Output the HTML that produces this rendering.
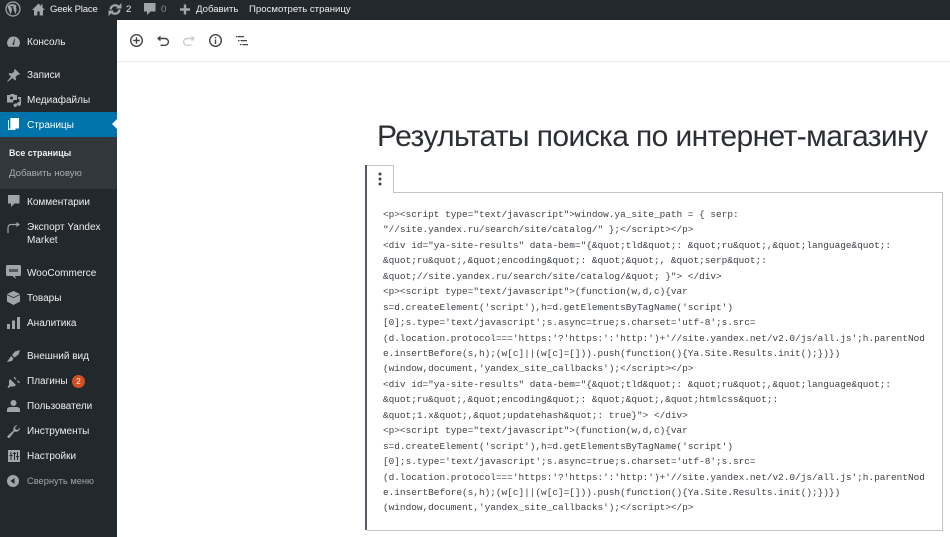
<!DOCTYPE html>
<html lang="ru"><head><meta charset="utf-8"><title>Редактировать страницу</title>
<style>
html,body{margin:0;padding:0;width:950px;height:537px;overflow:hidden;background:#fff}
body{position:relative;font-family:"Liberation Sans","Noto Sans CJK SC",sans-serif}
.a{position:absolute;white-space:nowrap}
#top{left:0;top:0;width:950px;height:20px;background:#23282d}
#side{left:0;top:20px;width:117px;height:517px;background:#23282d}
.t{font-size:9.6px;line-height:14px;color:#eee;top:3px}
.m{font-size:10px;line-height:14px;color:#eee;left:27px;margin-top:1px}
svg{position:absolute;overflow:visible}
.ic{fill:#a0a5aa}
.code{left:383px;margin-top:1px;font-family:"Liberation Mono",monospace;font-size:9.42px;line-height:14px;color:#3c4146}
.tb{fill:none;stroke:#444;stroke-width:1.4}
</style></head><body>
<div class="a" id="top"></div>
<div class="a" id="side"></div>
<div class="a" style="left:0;top:112px;width:117px;height:25px;background:#0073aa"></div>
<div class="a" style="left:0;top:137px;width:117px;height:52px;background:#32373c"></div>
<div class="a" style="left:112px;top:119px;width:0;height:0;border:5.5px solid transparent;border-right-color:#fff;border-left:0"></div>

<!-- admin bar -->
<svg style="left:5px;top:1px" width="16" height="16" viewBox="0 0 16 16"><circle cx="8" cy="8" r="7" fill="none" stroke="#a0a5aa" stroke-width="1.3"/><path class="ic" d="M2.500 5.500l3 8 1.600-4.600-1-3h-.9V5.300h3.600v.6h-1l2.600 7.400 1-3.400c.4-1.500-.1-2.300-.5-3-.3-.5-.1-1.600 1-1.700A6 6 0 0 0 2.500 5.500z"/></svg>
<svg style="left:32px;top:3px" width="13" height="13" viewBox="0 0 13 13"><path class="ic" d="M6.500 0.500L0 7h2v5.500h3.300V8.500h2.400v4H11V7h2l-2.500-2.500V1.500H9V3z"/></svg>
<div class="a t" style="left:50px;letter-spacing:-.2px">Geek Place</div>
<svg style="left:108px;top:3px" width="14" height="13" viewBox="0 0 14 13"><path fill="none" stroke="#a0a5aa" stroke-width="2.200" d="M2.500 6.500a4.500 4.500 0 0 1 8-2.500M11.500 6.500a4.500 4.500 0 0 1-8 2.500"/><path class="ic" d="M8 5.500h5.500V0zM6 7.500H.5V13z"/></svg>
<div class="a t" style="left:126px">2</div>
<svg style="left:144px;top:3px" width="12" height="13" viewBox="0 0 12 13"><path class="ic" d="M0 0h11.500v8.500H6.500L3 12V8.500H0z"/></svg>
<div class="a t" style="left:161px;color:#8a8f94">0</div>
<svg style="left:180px;top:4px" width="10" height="11" viewBox="0 0 10 10"><path class="ic" d="M3.800 0h2.400v3.800H10v2.400H6.200V10H3.800V6.200H0V3.800h3.800z"/></svg>
<div class="a t" style="left:196px">Добавить</div>
<div class="a t" style="left:249px">Просмотреть страницу</div>

<!-- sidebar -->
<svg style="left:7px;top:36px" width="13" height="12" viewBox="0 0 13 12"><path class="ic" d="M6.500 0.500a6.300 6.300 0 0 0-5 10.200h10a6.300 6.300 0 0 0-5-10.200z"/><path fill="#23282d" d="M6 7l1.500-4.500.6.200L7.200 7.300a1 1 0 1 1-1.200-.3z"/></svg>
<div class="a m" style="top:35px">Консоль</div>
<svg style="left:7px;top:69px" width="13" height="13" viewBox="0 0 13 13"><path class="ic" d="M8 0l5 5-1 1-1-.5-2.500 2.500.5 2.500-1 1-2.500-2.500L1 12.500 0 13l.5-1 3.500-4.500L1.500 5l1-1 2.500.5L7.500 2 7 1z"/></svg>
<div class="a m" style="top:68px">Записи</div>
<svg style="left:7px;top:94px" width="14" height="13" viewBox="0 0 14 13"><path class="ic" d="M0 1h3l1-1h3l1 1h2v5H6.500L6 8.500H0zM11 3h3v7a2 2 0 1 1-1.500-2V5H11zM6.500 9.500H10V11a1.800 1.800 0 1 1-1.500-1.500H7z"/><circle cx="4.500" cy="4" r="1.500" fill="#23282d"/></svg>
<div class="a m" style="top:93px">Медиафайлы</div>
<svg style="left:8px;top:118px" width="11" height="13" viewBox="0 0 11 13"><path fill="#d9ecf4" d="M0 2h1v8.500h6.500V12H0z"/><path fill="#fff" d="M2.300 0H11v10.500H2.300z"/></svg>
<div class="a m" style="top:118px;color:#fff">Страницы</div>
<div class="a" style="left:9px;top:146px;font-size:8.9px;line-height:14px;font-weight:bold;color:#eee">Все страницы</div>
<div class="a" style="left:9px;top:167px;font-size:9.65px;line-height:14px;color:#a8adb2">Добавить новую</div>
<svg style="left:8px;top:195px" width="12" height="13" viewBox="0 0 12 13"><path class="ic" d="M0 0h11.500v8.500H6.500L3 12V8.500H0z"/></svg>
<div class="a m" style="top:195px">Комментарии</div>
<svg style="left:7px;top:221px" width="13" height="13" viewBox="0 0 13 13"><path fill="none" stroke="#a0a5aa" stroke-width="1.200" d="M11 3.500H4.500Q1 3.500 1 7v5"/><path class="ic" d="M9.500 1l3.500 2.500L9.500 6z"/></svg>
<div class="a m" style="top:220px">Экспорт Yandex</div>
<div class="a m" style="top:233px">Market</div>
<svg style="left:6px;top:265px" width="15" height="14" viewBox="0 0 15 14"><path class="ic" d="M1.500 0h12A1.500 1.500 0 0 1 15 1.500v8a1.500 1.500 0 0 1-1.500 1.500H9l1 3-3.500-3h-5A1.500 1.500 0 0 1 0 9.500v-8A1.500 1.500 0 0 1 1.500 0z"/><path fill="#23282d" d="M3 4h9v3H3z" opacity=".6"/></svg>
<div class="a m" style="top:266px">WooCommerce</div>
<svg style="left:6px;top:291px" width="15" height="14" viewBox="0 0 15 14"><path class="ic" d="M7.500 0L14 3v7.500L7.500 14 1 10.500V3z"/><path fill="none" stroke="#23282d" stroke-width=".8" d="M1 3.500l6.500 3.200L14 3.500"/></svg>
<div class="a m" style="top:291px">Товары</div>
<svg style="left:7px;top:317px" width="13" height="12" viewBox="0 0 13 12"><path class="ic" d="M0 7h3v5H0zM5 3.500h3V12H5zM10 0h3v12h-3z"/></svg>
<div class="a m" style="top:316px">Аналитика</div>
<svg style="left:7px;top:350px" width="13" height="12" viewBox="0 0 13 12"><path class="ic" d="M0 12l4-6 2.500 2.200L5 11zM5 5l3-3.500L13 0l-1.500 4.500-4 3z"/></svg>
<div class="a m" style="top:349px">Внешний вид</div>
<svg style="left:7px;top:375px" width="13" height="13" viewBox="0 0 13 13"><path class="ic" d="M3 4l6 6-2 1.500H3.500L1.500 13 .5 12 2 10V6zM6.500 2.500l1-.8 2 2.300-1 .8zM10 6l1-.8 2 2.200-1 .8z"/></svg>
<div class="a m" style="top:374px">Плагины</div>
<div class="a" style="left:72px;top:375px;width:13px;height:13px;border-radius:50%;background:#d54e21;color:#fff;font-size:8px;line-height:13px;text-align:center">2</div>
<svg style="left:7px;top:400px" width="13" height="12" viewBox="0 0 13 12"><circle class="ic" cx="6.500" cy="3" r="3"/><path class="ic" d="M0 12V9.500Q0 7.500 3 7h7q3 .5 3 2.500V12z"/></svg>
<div class="a m" style="top:399px">Пользователи</div>
<svg style="left:7px;top:425px" width="13" height="13" viewBox="0 0 13 13"><path class="ic" d="M13 3a4 4 0 0 1-5.500 3.500L2.800 12.500a1.300 1.300 0 0 1-2-1.800L6.500 5.500A4 4 0 0 1 10.500.3L8 2.500l.5 2 2 .5 2.300-2.300z"/></svg>
<div class="a m" style="top:424px">Инструменты</div>
<svg style="left:8px;top:450px" width="12" height="12" viewBox="0 0 12 12"><path class="ic" d="M0 0h12v12H0z"/><path fill="#23282d" d="M2.500 2h1v3h1v1h-1v4h-1V6h-1V5h1zM6 2h1v1h1v1H7v6H6V4H5V3h1zM9 2h1v4h1v1h-1v3H9V7H8V6h1z"/></svg>
<div class="a m" style="top:449px">Настройки</div>
<svg style="left:7px;top:475px" width="12" height="12" viewBox="0 0 12 12"><circle class="ic" cx="6" cy="6" r="6"/><path fill="#23282d" d="M7.500 3v6L3.500 6z"/></svg>
<div class="a" style="left:27px;top:474px;font-size:9.3px;line-height:14px;color:#a0a5aa">Свернуть меню</div>

<!-- editor toolbar -->
<div class="a" style="left:117px;top:61px;width:833px;height:1px;background:#e8eaeb"></div>
<svg style="left:130px;top:34px" width="13" height="13" viewBox="0 0 13 13"><circle class="tb" cx="6.500" cy="6.500" r="5.800"/><path class="tb" d="M6.500 3.200v6.600M3.200 6.500h6.600"/></svg>
<svg style="left:157px;top:35px" width="12" height="12" viewBox="0 0 12 12"><path class="tb" d="M2 3.500h6a3.300 3.300 0 0 1 0 6.800H3.500"/><path fill="#444" d="M3.500 0.500v6L0 3.500z"/></svg>
<svg style="left:183px;top:35px" width="12" height="12" viewBox="0 0 12 12"><path fill="none" stroke="#ccc" stroke-width="1.400" d="M10 3.500H4a3.300 3.300 0 0 0 0 6.800h4.500"/><path fill="#ccc" d="M8.500 0.500v6L12 3.500z"/></svg>
<svg style="left:209px;top:34px" width="13" height="13" viewBox="0 0 13 13"><circle class="tb" cx="6.500" cy="6.500" r="5.800"/><path fill="#444" d="M5.800 5.500h1.400V10H5.800zM5.800 3h1.400v1.400H5.800z"/></svg>
<svg style="left:236px;top:36px" width="12" height="10" viewBox="0 0 12 10"><path fill="#444" d="M0 0h1.500v1.200H0zM2 0h6v1.200H2zM2 4h1.500v1.200H2zM4.500 4H11v1.200H4.500zM4 8h1.500v1.200H4zM6.500 8H12v1.200H6.500z"/></svg>

<!-- title -->
<div class="a" style="left:377px;top:118px;font-size:30px;line-height:38px;color:#2b2f33;letter-spacing:-.6px">Результаты поиска по интернет-магазину</div>

<!-- block -->
<div class="a" style="left:365px;top:165px;width:2px;height:365px;background:#555d66"></div>
<div class="a" style="left:367px;top:192px;width:575px;height:337px;border:1px solid #bcc4c9;border-left:0;box-sizing:content-box"></div>
<div class="a" style="left:367px;top:165px;width:26px;height:27px;border:1px solid #bcc4c9;border-left:0;border-bottom:0;background:#fff"></div>
<svg style="left:378px;top:172px" width="4" height="14" viewBox="0 0 4 14"><circle cx="2" cy="2" r="1.500" fill="#444"/><circle cx="2" cy="7" r="1.500" fill="#444"/><circle cx="2" cy="12" r="1.500" fill="#444"/></svg>

<div class="a code" style="top:207px">&lt;p&gt;&lt;script type="text/javascript"&gt;window.ya_site_path = { serp:</div>
<div class="a code" style="top:222px">"//site.yandex.ru/search/site/catalog/" };&lt;/script&gt;&lt;/p&gt;</div>
<div class="a code" style="top:238px">&lt;div id="ya-site-results" data-bem="{&amp;quot;tld&amp;quot;: &amp;quot;ru&amp;quot;,&amp;quot;language&amp;quot;:</div>
<div class="a code" style="top:253px">&amp;quot;ru&amp;quot;,&amp;quot;encoding&amp;quot;: &amp;quot;&amp;quot;, &amp;quot;serp&amp;quot;:</div>
<div class="a code" style="top:269px">&amp;quot;//site.yandex.ru/search/site/catalog/&amp;quot; }"&gt; &lt;/div&gt;</div>
<div class="a code" style="top:284px">&lt;p&gt;&lt;script type="text/javascript"&gt;(function(w,d,c){var</div>
<div class="a code" style="top:300px">s=d.createElement('script'),h=d.getElementsByTagName('script')</div>
<div class="a code" style="top:315px">[0];s.type='text/javascript';s.async=true;s.charset='utf-8';s.src=</div>
<div class="a code" style="top:331px">(d.location.protocol==='https:'?'https:':'http:')+'//site.yandex.net/v2.0/js/all.js';h.parentNod</div>
<div class="a code" style="top:346px">e.insertBefore(s,h);(w[c]||(w[c]=[])).push(function(){Ya.Site.Results.init();})})</div>
<div class="a code" style="top:361px">(window,document,'yandex_site_callbacks');&lt;/script&gt;&lt;/p&gt;</div>
<div class="a code" style="top:377px">&lt;div id="ya-site-results" data-bem="{&amp;quot;tld&amp;quot;: &amp;quot;ru&amp;quot;,&amp;quot;language&amp;quot;:</div>
<div class="a code" style="top:392px">&amp;quot;ru&amp;quot;,&amp;quot;encoding&amp;quot;: &amp;quot;&amp;quot;,&amp;quot;htmlcss&amp;quot;:</div>
<div class="a code" style="top:408px">&amp;quot;1.x&amp;quot;,&amp;quot;updatehash&amp;quot;: true}"&gt; &lt;/div&gt;</div>
<div class="a code" style="top:423px">&lt;p&gt;&lt;script type="text/javascript"&gt;(function(w,d,c){var</div>
<div class="a code" style="top:439px">s=d.createElement('script'),h=d.getElementsByTagName('script')</div>
<div class="a code" style="top:454px">[0];s.type='text/javascript';s.async=true;s.charset='utf-8';s.src=</div>
<div class="a code" style="top:470px">(d.location.protocol==='https:'?'https:':'http:')+'//site.yandex.net/v2.0/js/all.js';h.parentNod</div>
<div class="a code" style="top:485px">e.insertBefore(s,h);(w[c]||(w[c]=[])).push(function(){Ya.Site.Results.init();})})</div>
<div class="a code" style="top:500px">(window,document,'yandex_site_callbacks');&lt;/script&gt;&lt;/p&gt;</div>
</body></html>
